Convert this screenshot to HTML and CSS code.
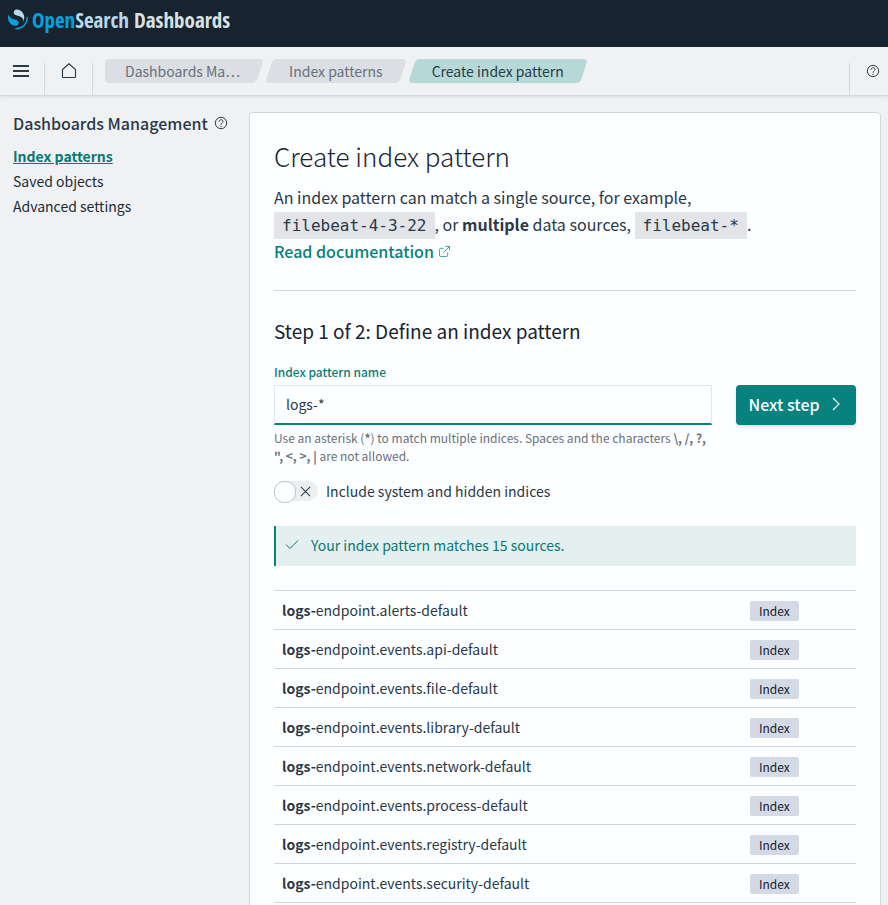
FILE: index.html
```html
<!DOCTYPE html>
<html lang="en">
<head>
<meta charset="utf-8">
<title>Create index pattern - OpenSearch Dashboards</title>
<link rel="stylesheet" href="styles.css">
</head>
<body>
<header class="brandbar">
  <a class="brand" href="#">
    <svg class="brand-mark" viewBox="0 0 64 64" aria-hidden="true">
      <path fill="#00a3e0" d="M61.7 23.5a2.3 2.3 0 0 0-2.3 2.3 33.7 33.7 0 0 1-33.7 33.7 2.3 2.3 0 1 0 0 4.5A38.2 38.2 0 0 0 64 25.8a2.3 2.3 0 0 0-2.3-2.3Z"/>
      <path fill="#b9d9eb" d="M48.1 38c2.2-3.5 4.3-8.2 3.9-14.8C51.100 9.600 38.800-.7 27.200 0c-4.500.3-9.200 4-8.800 10.700.2 3 1.600 4.700 4 6.100 2.200 1.200 5.100 2 8.400 2.900 4 1.100 8.600 2.400 12.100 5 4.200 3.100 7.100 6.700 5.200 13.300Z"/>
      <path fill="#00a3e0" d="M3.900 14C1.700 17.500-.4 22.200 0 28.800c.9 13.600 13.200 23.900 24.800 23.200 4.500-.3 9.200-4 8.800-10.700-.2-3-1.600-4.700-4-6.100-2.200-1.200-5.100-2-8.400-2.900-4-1.100-8.600-2.400-12.100-5C4.900 24.200 2 20.600 3.900 14Z"/>
    </svg>
    <span class="brand-name"><span class="brand-open">Open</span><span class="brand-search">Search</span> Dashboards</span>
  </a>
</header>
<div class="navbar">
  <button class="nav-item nav-menu" type="button" aria-label="Menu">
    <svg class="icon" viewBox="0 0 16 16" aria-hidden="true"><path d="M0 3h16M0 8h16M0 13h16" fill="none" stroke="currentColor" stroke-width="2"/></svg>
  </button>
  <a class="nav-item" href="#" aria-label="Home">
    <svg class="icon" viewBox="0 0 16 16" aria-hidden="true"><path d="M1.500 6.500 8 .8l6.500 5.700V14a.5.5 0 0 1-.5.5H2a.5.5 0 0 1-.5-.5Z" fill="none" stroke="currentColor" stroke-width="1.100"/></svg>
  </a>
  <nav class="crumbs" aria-label="Breadcrumb">
    <a class="crumb crumb-first" href="#">Dashboards Ma…</a>
    <a class="crumb" href="#">Index patterns</a>
    <span class="crumb crumb-current" aria-current="page">Create index pattern</span>
  </nav>
  <button class="nav-item nav-help" type="button" aria-label="Help">
    <svg class="icon-help" viewBox="0 0 16 16" aria-hidden="true"><g fill="none" stroke="currentColor" stroke-width="1.100"><circle cx="8" cy="8" r="6.500"/><path d="M5.800 6.500C5.800 3.500 10.300 3.600 10.300 6.200 10.300 8 8 7.900 8 10"/></g><circle cx="8" cy="11.800" r=".8" fill="currentColor"/></svg>
  </button>
</div>
<div class="page">
  <aside class="sidebar">
    <h2 class="sidebar-title">Dashboards Management
      <svg class="icon-help" viewBox="0 0 16 16" aria-hidden="true"><g fill="none" stroke="currentColor" stroke-width="1.100"><circle cx="8" cy="8" r="6.500"/><path d="M5.800 6.500C5.800 3.500 10.300 3.600 10.300 6.200 10.300 8 8 7.900 8 10"/></g><circle cx="8" cy="11.800" r=".8" fill="currentColor"/></svg>
    </h2>
    <nav class="sidenav">
      <a class="active" href="#">Index patterns</a>
      <a href="#">Saved objects</a>
      <a href="#">Advanced settings</a>
    </nav>
  </aside>
  <main class="panel">
    <h1>Create index pattern</h1>
    <p class="intro">An index pattern can match a single source, for example,<br><code>filebeat-4-3-22</code>, or <strong>multiple</strong> data sources, <code>filebeat-*</code>.<br>
      <a class="doclink" href="#">Read documentation<svg class="icon-ext" viewBox="0 0 12 12" aria-hidden="true"><path d="M5 2.500H2A1.500 1.500 0 0 0 .5 4v6A1.500 1.500 0 0 0 2 11.500h6A1.500 1.500 0 0 0 9.500 10V7M7 .5h4.500V5M11.500.5 4.500 7.500" fill="none" stroke="currentColor" stroke-width=".8"/></svg></a></p>
    <hr>
    <h2 class="step">Step 1 of 2: Define an index pattern</h2>
    <form class="form">
      <div class="field">
        <label for="pattern">Index pattern name</label>
        <input id="pattern" class="text" type="text" value="logs-*">
        <p class="help">Use an asterisk (<strong>*</strong>) to match multiple indices. Spaces and the characters <strong>\, /, ?, ", &lt;, &gt;, |</strong> are not allowed.</p>
      </div>
      <button class="next" type="button">Next step
        <svg class="icon-next" viewBox="0 0 16 16" aria-hidden="true"><path d="m5 2 6 6-6 6" fill="none" stroke="currentColor" stroke-width="1.100"/></svg>
      </button>
    </form>
    <div class="switch">
      <input id="hidden" type="checkbox" role="switch">
      <svg class="switch-x" viewBox="0 0 12 12" aria-hidden="true"><path d="m1 1 10 10M11 1 1 11" fill="none" stroke="currentColor" stroke-width="1.100"/></svg>
      <label for="hidden">Include system and hidden indices</label>
    </div>
    <div class="callout" role="status">
      <svg class="icon-check" viewBox="0 0 16 16" aria-hidden="true"><path d="m2 7.500 4 4L14 3.500" fill="none" stroke="currentColor"/></svg>
      <span>Your index pattern matches 15 sources.</span>
    </div>
    <table class="sources">
      <tbody>
        <tr><td><strong>logs-</strong>endpoint.alerts-default</td><td class="kind"><span class="badge">Index</span></td></tr>
        <tr><td><strong>logs-</strong>endpoint.events.api-default</td><td class="kind"><span class="badge">Index</span></td></tr>
        <tr><td><strong>logs-</strong>endpoint.events.file-default</td><td class="kind"><span class="badge">Index</span></td></tr>
        <tr><td><strong>logs-</strong>endpoint.events.library-default</td><td class="kind"><span class="badge">Index</span></td></tr>
        <tr><td><strong>logs-</strong>endpoint.events.network-default</td><td class="kind"><span class="badge">Index</span></td></tr>
        <tr><td><strong>logs-</strong>endpoint.events.process-default</td><td class="kind"><span class="badge">Index</span></td></tr>
        <tr><td><strong>logs-</strong>endpoint.events.registry-default</td><td class="kind"><span class="badge">Index</span></td></tr>
        <tr><td><strong>logs-</strong>endpoint.events.security-default</td><td class="kind"><span class="badge">Index</span></td></tr>
      </tbody>
    </table>
  </main>
</div>
</body>
</html>
```
FILE: styles.css
```css
* { box-sizing: border-box; }

body {
  margin: 0;
  background: #f0f1f3;
  color: #2a3947;
  font-family: "Noto Sans CJK SC", "Open Sans", sans-serif;
  font-size: 14px;
  line-height: 24px;
}

h1, h2, p { margin: 0; }
a { color: inherit; text-decoration: none; }
button { border: 0; background: none; font: inherit; color: inherit; cursor: pointer; }
svg { display: block; flex: none; }

/* Brand bar */
.brandbar {
  display: flex;
  height: 47px;
  padding: 8px 8px 16px;
  background: #172430;
}
.brand { display: flex; align-items: center; gap: 4px; color: #d9e1e2; }
.brand-mark { width: 20px; height: 21px; }
.brand-name {
  font-family: "Open Sans Condensed", "Noto Sans CJK SC", sans-serif;
  font-size: 21px;
  font-weight: 700;
}
.brand-open { color: #00a3e0; }
.brand-search { color: #b9d9eb; }

/* Navigation bar */
.navbar {
  display: flex;
  height: 49px;
  border-bottom: 1px solid #d5d8dd;
  box-shadow: 0 1px 3px rgba(0, 0, 0, .08);
}
.nav-item {
  display: flex;
  justify-content: center;
  width: 48px;
  height: 32px;
  margin-top: 16px;
  padding: 0;
  border-right: 1px solid #d3d6db;
}
.nav-menu { width: 45px; padding-right: 2px; }
.icon { width: 16px; height: 16px; }
.icon-help { width: 14px; height: 14px; }
.nav-help {
  width: 39px;
  margin-left: auto;
  padding: 1px 0 0 8px;
  border-right: 0;
  border-left: 1px solid #d3d6db;
}
.crumbs { display: flex; gap: 9px; padding: 12px; }
.crumb {
  position: relative;
  z-index: 0;
  height: 24px;
  padding: 0 20px;
  color: #69707d;
}
.crumb::before {
  content: "";
  position: absolute;
  z-index: -1;
  inset: 0;
  border-radius: 4px;
  background: #dbdee2;
  transform: skewX(-18deg);
}
.crumb-first { border-radius: 4px; background: linear-gradient(#dbdee2, #dbdee2) 0 0 / 80% 100% no-repeat; }
.crumb-first::before { left: 8px; }
.crumb-current { color: #2a3947; }
.crumb-current::before { background: #b6d9d8; }

/* Page body */
.page { display: flex; align-items: flex-start; padding: 16px 7px 0 13px; }
.sidebar { width: 236px; flex: none; }
.sidebar-title {
  display: flex;
  align-items: center;
  gap: 6px;
  font-size: 16px;
  font-weight: 500;
  line-height: 22px;
}
.sidenav { display: flex; flex-direction: column; align-items: flex-start; gap: 1px; padding-top: 10px; color: #1d2b38; }
.sidenav .active { color: #0a7775; font-weight: 700; text-decoration: underline; }

.panel {
  flex: 1;
  min-width: 0;
  padding: 24px;
  border: 1px solid #d3d6dc;
  border-radius: 4px;
  background: #fdfeff;
}
h1 { font-size: 26px; line-height: 38px; font-weight: 200; color: #172430; }
.intro { padding: 9px 0 1px; font-size: 16px; line-height: 27px; }
code {
  padding: 4px 8px;
  background: #e3e4e7;
  font-family: "DejaVu Sans Mono", monospace;
  font-size: 16px;
  line-height: 19px;
}
.doclink { display: inline-flex; align-items: center; gap: 5px; color: #0a7f7a; font-weight: 500; }
.icon-ext { width: 11px; height: 11px; }
hr { height: 1px; margin: 24px 0; border: 0; background: #d3d6dc; }
.step { font-size: 19px; line-height: 32px; font-weight: 400; color: #172430; }

.form { display: flex; align-items: flex-start; gap: 24px; padding-top: 16px; }
.field { flex: 1; min-width: 0; }
.field label { display: block; color: #0a7f7a; font-size: 12px; font-weight: 500; line-height: 18px; }
.text {
  display: block;
  width: 100%;
  height: 40px;
  margin-top: 4px;
  padding: 0 11px 2px;
  border: 1px solid #e2e6ea;
  border-bottom: 2px solid #07827e;
  border-radius: 0;
  background: #fdfeff;
  color: #2a3947;
  font: inherit;
  outline: 0;
}
.help { padding-top: 4px; color: #69707d; font-size: 12px; line-height: 18px; }
.next {
  display: flex;
  align-items: center;
  justify-content: center;
  gap: 8px;
  width: 120px;
  height: 40px;
  margin-top: 22px;
  padding: 0 0 2px;
  border-radius: 4px;
  background: #07827e;
  box-shadow: 0 2px 3px rgba(0, 0, 0, .12);
  color: #fdfeff;
  font-size: 16px;
  font-weight: 500;
}
.icon-next { width: 16px; height: 16px; }

.switch { position: relative; display: flex; align-items: center; gap: 8px; padding-top: 14px; }
.switch input {
  appearance: none;
  width: 44px;
  height: 20px;
  margin: 0;
  border-radius: 10px;
  background: #eceef0;
}
.switch input::before {
  content: "";
  display: block;
  width: 20px;
  height: 20px;
  border: 1px solid #bfc3c8;
  border-radius: 10px;
  background: #fdfeff;
}
.switch-x { position: absolute; left: 26px; bottom: 6px; width: 11px; height: 11px; pointer-events: none; }

.callout {
  display: flex;
  align-items: center;
  gap: 11px;
  height: 40px;
  margin: 23px 0 24px;
  padding: 0 0 2px 8px;
  border-left: 2px solid #07827e;
  background: #e3f0ef;
  color: #0a7775;
}
.icon-check { width: 16px; height: 16px; }

.sources { width: 100%; border-collapse: collapse; border-bottom: 1px solid #d3d6dc; }
.sources td { height: 39px; padding: 0 8px 1px; border-top: 1px solid #d3d6dc; }
.sources .kind { width: 114px; }
.badge {
  display: block;
  width: max-content;
  padding: 0 9px;
  margin-top: 2px;
  border-radius: 2px;
  background: #d3dae6;
  color: #17202a;
  font-size: 12px;
  line-height: 20px;
}
```
